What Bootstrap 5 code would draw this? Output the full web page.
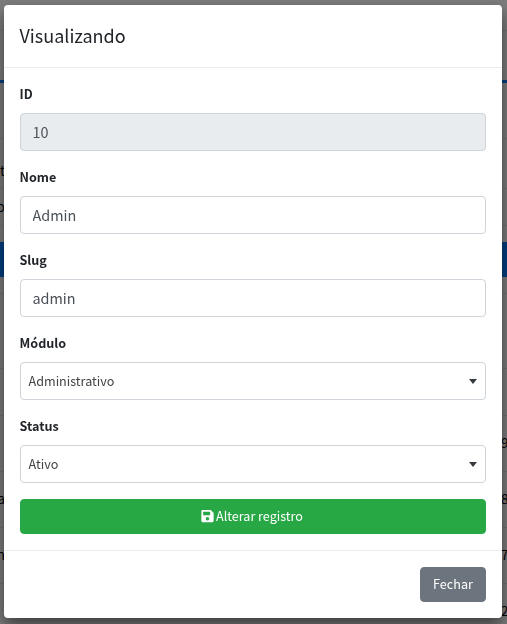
<!DOCTYPE html>
<html lang="pt-BR">
<head>
<meta charset="utf-8">
<meta name="viewport" content="width=device-width, initial-scale=1">
<title>Visualizando</title>
<link href="https://cdn.jsdelivr.net/npm/bootstrap@5.3.0/dist/css/bootstrap.min.css" rel="stylesheet">
<style>
body{font-family:"Noto Sans CJK SC","Noto Sans",sans-serif;font-size:13px;line-height:21px;color:#212529;background:#fff;height:624px;overflow:hidden}
.page-under{height:624px;overflow:hidden;background:#f8f8f8}
.strip{border-bottom:1px solid #dee2e6;color:#000;font-size:13.500px;line-height:20px;flex:none}
.strip span{width:5px;white-space:nowrap;display:flex;justify-content:flex-end;padding-bottom:3px}
.strip span+span{width:6px;justify-content:flex-start}
.strip.line-blue{border-bottom:3px solid #007bff}
.strip.fill-blue{background:#007bff;border:0}
.tall-31{height:31px}.tall-52{height:52px}.tall-56{height:56px}.tall-50{height:50px}.tall-37{height:37px}.tall-16{height:16px}.tall-17{height:17px}.tall-35{height:35px}.tall-75{height:75px}.tall-47{height:47px}
.modal-backdrop{--bs-backdrop-opacity:.5}
.modal-dialog.view-dialog{margin:5px 5px 6px 4px;max-width:none}
.view-dialog .modal-content{border:0;border-radius:4px;box-shadow:0 8px 16px rgba(0,0,0,.5)}
.view-dialog .modal-header{height:63px;padding:15px 16px 17px 15.5px;border-bottom:1px solid #e9ecef}
.view-dialog .modal-title{font-size:18px;line-height:30px;font-weight:400}
.view-dialog .form-label{display:block;font-weight:700;font-size:12.6px;line-height:19px;height:21px;margin-left:-.5px}
.view-dialog .form-control{height:38px;padding:5px 12px 7px 11.5px;font-size:14.4px;line-height:24px;color:#495057;border:1px solid #ced4da;border-radius:4px}
.view-dialog .form-control:disabled{background:#e9ecef}
.pick{height:38px;padding:0 8px 0 7.5px;border:1px solid #ced4da;border-radius:4px;background:#fff;color:#444;font-size:12.6px}
.pick span{padding-bottom:2px}
.view-dialog .btn{height:35px;font-size:12.6px;line-height:21px;padding:5px 12px 7px;border-radius:4px;color:#fff}
.view-dialog .btn-save{background:#28a745;border-color:#28a745;padding-right:14px}
.btn-save svg{margin:0 2px 0 0}
.view-dialog .btn-close-view{background:#6c757d;border-color:#6c757d;width:66px}
.view-dialog .modal-footer{height:68px;padding:16px;border-top:1px solid #e9ecef}
.view-dialog .modal-footer>*{margin:0}
</style>
</head>
<body>
<div class="page-under d-flex flex-column">
  <div class="strip tall-31"></div>
  <div class="strip line-blue tall-52"></div>
  <div class="strip tall-56"></div>
  <div class="strip tall-50 d-flex align-items-center pt-3"><span>at</span></div>
  <div class="strip tall-37 d-flex align-items-center"><span>o</span></div>
  <div class="strip tall-16 border-0"></div>
  <div class="strip fill-blue tall-35"></div>
  <div class="strip tall-17"></div>
  <div class="strip tall-75"></div>
  <div class="strip tall-47"></div>
  <div class="strip tall-56 d-flex align-items-center justify-content-between"><span></span><span>9</span></div>
  <div class="strip tall-56 d-flex align-items-center justify-content-between"><span>a</span><span>8</span></div>
  <div class="strip tall-56 d-flex align-items-center justify-content-between"><span>n</span><span>7</span></div>
  <div class="strip tall-56 d-flex align-items-center justify-content-between"><span></span><span>2</span></div>
</div>
<div class="modal-backdrop show"></div>
<div class="modal d-block overflow-hidden" tabindex="-1" role="dialog">
  <div class="modal-dialog view-dialog">
    <div class="modal-content">
      <div class="modal-header"><h4 class="modal-title">Visualizando</h4></div>
      <div class="modal-body p-3">
        <div class="mb-3"><label class="form-label mb-2" for="id">ID</label><input class="form-control" id="id" value="10" disabled></div>
        <div class="mb-3"><label class="form-label mb-2" for="nome">Nome</label><input class="form-control" id="nome" value="Admin"></div>
        <div class="mb-3"><label class="form-label mb-2" for="slug">Slug</label><input class="form-control" id="slug" value="admin"></div>
        <div class="mb-3"><div class="form-label mb-2">Módulo</div>
          <div class="pick d-flex align-items-center justify-content-between"><span>Administrativo</span><svg width="8" height="5" viewBox="0 0 8 5"><path d="M0 0h8L4 5z" fill="#343a40"/></svg></div></div>
        <div class="mb-3"><div class="form-label mb-2">Status</div>
          <div class="pick d-flex align-items-center justify-content-between"><span>Ativo</span><svg width="8" height="5" viewBox="0 0 8 5"><path d="M0 0h8L4 5z" fill="#343a40"/></svg></div></div>
        <button type="button" class="btn btn-save w-100 d-flex align-items-center justify-content-center"><svg width="13" height="14" viewBox="0 0 448 512" fill="#fff"><path d="M433.900 129.900l-83.800-83.800A48 48 0 0 0 316.100 32H48C21.500 32 0 53.500 0 80v352c0 26.500 21.500 48 48 48h352c26.500 0 48-21.500 48-48V163.900a48 48 0 0 0-14.100-34zM224 416c-35.300 0-64-28.700-64-64s28.700-64 64-64 64 28.700 64 64-28.700 64-64 64zm96-304.500V212c0 6.600-5.400 12-12 12H76c-6.600 0-12-5.400-12-12V108c0-6.600 5.400-12 12-12h228.500c3.200 0 6.200 1.300 8.500 3.500l3.500 3.500a12 12 0 0 1 3.500 8.500z"/></svg><span>Alterar registro</span></button>
      </div>
      <div class="modal-footer"><button type="button" class="btn btn-close-view">Fechar</button></div>
    </div>
  </div>
</div>
<script src="https://cdn.jsdelivr.net/npm/bootstrap@5.3.0/dist/js/bootstrap.bundle.min.js"></script>
</body>
</html>
